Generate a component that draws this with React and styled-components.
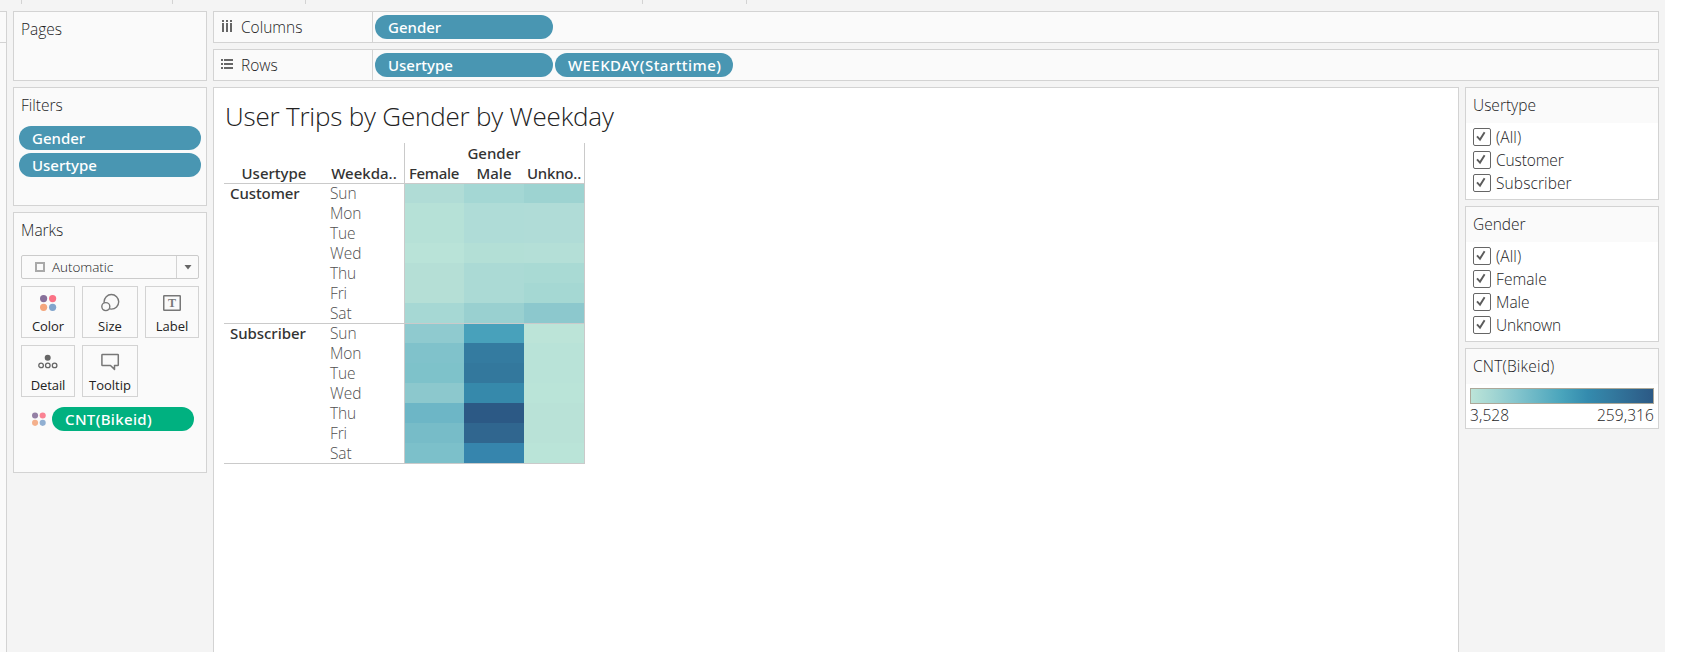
import React from 'react';
import styled, { createGlobalStyle } from 'styled-components';

const line = '#d3d3d3';
const panelBg = '#fafafa';
const ink = '#1c1c1e';

const GlobalStyle = createGlobalStyle`
  *, *::before, *::after { box-sizing: border-box; }
  body {
    margin: 0;
    background: #fff;
    color: ${ink};
    font: 300 15.5px/20px 'Open Sans', 'Noto Sans', sans-serif;
    overflow: hidden;
  }
  svg { display: block; flex: none; }
`;

const Workbook = styled.div`
  display: flex;
  flex-direction: column;
  width: 1665px;
  height: 652px;
  background: #f4f4f4;
`;

const ToolbarEdge = styled.div`
  display: flex;
  height: 11px;
  flex: none;
`;

const Separator = styled.div`
  width: 1px;
  height: 4px;
  margin-left: ${p => p.$gap}px;
  background: ${line};
`;

const Workspace = styled.div`
  display: flex;
  flex: 1;
  min-height: 0;
`;

const DataPane = styled.div`
  width: 7px;
  border: solid ${line};
  border-width: 1px 1px 0 0;
  background: ${panelBg};
`;

const DataPaneHeader = styled.div`
  height: 31px;
  border-bottom: 1px solid ${line};
`;

const CardColumn = styled.div`
  display: flex;
  flex-direction: column;
  gap: 6px;
  width: 194px;
  margin: 0 6px;
`;

const Card = styled.section`
  height: ${p => p.$height}px;
  border: 1px solid ${line};
  background: ${panelBg};
`;

const CardTitle = styled.h2`
  margin: 0 0 0 7px;
  padding-top: 6px;
  height: 29px;
  font: inherit;
  line-height: 22px;
  letter-spacing: ${p => p.$track || 0}px;
`;

const PillStack = styled.div`
  display: flex;
  flex-direction: column;
  gap: 3px;
  padding: 9px 5px 0;
`;

const Pill = styled.div`
  width: ${p => p.$width}px;
  height: 24px;
  padding-left: 13px;
  border-radius: 12px;
  background: ${p => (p.$measure ? '#00b180' : '#4996b2')};
  color: #fff;
  font: 500 15px/24px 'Noto Sans', sans-serif;
  letter-spacing: ${p => p.$track || 0}px;
  white-space: nowrap;
`;

const MarkBody = styled.div`
  padding: 13px 7px 0;
`;

const MarkType = styled.div`
  display: flex;
  align-items: center;
  height: 24px;
  border: 1px solid #cbcbcb;
  border-radius: 2px;
  font-size: 13.5px;
  letter-spacing: -0.05px;
`;

const MarkSquare = styled.span`
  width: 10px;
  height: 10px;
  margin: 0 7px 0 13px;
  border: 1.5px solid #a9a9a9;
  border-width: 2px;
`;

const DropButton = styled.span`
  display: flex;
  align-items: center;
  justify-content: center;
  width: 22px;
  height: 22px;
  margin-left: auto;
  border-left: 1px solid ${line};
`;

const MarkGrid = styled.div`
  display: grid;
  grid-template-columns: 54px 56px 54px;
  gap: 7px;
  margin-top: 7px;
`;

const MarkButton = styled.div`
  display: flex;
  flex-direction: column;
  align-items: center;
  height: 52px;
  padding-top: 6px;
  border: 1px solid ${line};
  color: #222;
  font-size: 13px;
  font-weight: 400;
  line-height: 18px;
`;

const MarkLabel = styled.span`
  margin-top: 4px;
  letter-spacing: ${p => p.$track || 0}px;
`;

const EncodedField = styled.div`
  display: flex;
  align-items: center;
  gap: 6px;
  margin: 10px 0 0 11px;
`;

const Main = styled.main`
  display: flex;
  flex-direction: column;
  gap: 6px;
  width: 1446px;
`;

const Shelf = styled.div`
  display: flex;
  flex: none;
  height: 32px;
  border: 1px solid ${line};
  background: ${panelBg};
`;

const ShelfLabel = styled.div`
  display: flex;
  align-items: center;
  gap: ${p => p.$gap}px;
  width: 159px;
  padding: 0 0 0 7px;
  border-right: 1px solid ${line};
  letter-spacing: ${p => p.$track || 0}px;

  svg { margin-bottom: 2px; }
`;

const ShelfPills = styled.div`
  display: flex;
  gap: 2px;
  padding: 3px 2px;
`;

const ViewRow = styled.div`
  display: flex;
  flex: 1;
  gap: 6px;
  min-height: 0;
`;

const Sheet = styled.section`
  width: 1246px;
  padding: 12px 10px 0;
  border: solid ${line};
  border-width: 1px 1px 0;
  background: #fff;
`;

const SheetTitle = styled.h1`
  margin: 0 0 0 1px;
  height: 43px;
  color: #222;
  font: 300 26px/32px 'Open Sans', sans-serif;
  letter-spacing: -0.2px;
`;

const CrossTab = styled.div`
  width: 361px;
  border-bottom: 1px solid #cacaca;
`;

const HeaderGrid = styled.div`
  display: grid;
  grid-template-columns: 100px 80px 181px;
  align-items: end;
  height: 40px;
`;

const HeaderText = styled.div`
  color: #333;
  font: 500 15px/20px 'Noto Sans', sans-serif;
  letter-spacing: ${p => p.$track || 0}px;
  text-align: center;
  white-space: nowrap;
`;

const ColumnHeaders = styled.div`
  display: grid;
  grid-template-columns: repeat(3, 60px);
  grid-template-rows: 20px 20px;
  width: 181px;
  margin-left: -0.5px;
  border: solid #cacaca;
  border-width: 0 1px;

  > :first-child { grid-column: 1 / -1; }
  > * { margin-left: -1px; }
`;

const GroupRow = styled.div`
  display: grid;
  grid-template-columns: 100px 80px 181px;
  height: 140px;
  border-top: 1px solid #cacaca;
`;

const GroupName = styled.div`
  margin-top: -1px;
  padding-left: 6px;
  color: #333;
  font: 500 15px/20px 'Noto Sans', sans-serif;
  letter-spacing: ${p => p.$track}px;
`;

const Days = styled.div`
  margin-top: -1px;
  padding-left: 6px;
  color: #505050;
  letter-spacing: -0.1px;
`;

const Heat = styled.div`
  display: grid;
  grid-template-columns: 59px 60px 60px;
  grid-template-rows: 19px repeat(6, 20px);
  border: solid #cacaca;
  border-width: 0 1px;
`;

const Cell = styled.div`
  background: ${p => p.$color};
`;

const Legends = styled.aside`
  display: flex;
  flex-direction: column;
  gap: 6px;
  width: 194px;
`;

const LegendCard = styled.section`
  height: ${p => p.$height}px;
  border: 1px solid ${line};
  background: #fff;
`;

const LegendTitle = styled.h2`
  margin: 0;
  height: 35px;
  padding: 6px 0 0 7px;
  background: ${panelBg};
  font: inherit;
  line-height: 22px;
  letter-spacing: ${p => p.$track || 0}px;
`;

const CheckList = styled.div`
  display: flex;
  flex-direction: column;
  gap: 5px;
  padding: 5px 7px;
`;

const CheckRow = styled.div`
  display: flex;
  align-items: center;
  gap: 5px;
  height: 18px;
  letter-spacing: ${p => p.$track || 0}px;
`;

const CheckBox = styled.span`
  width: 18px;
  height: 18px;
  border: 1px solid #666;
  border-radius: 2px;
`;

const Ramp = styled.div`
  height: 16px;
  margin: 4px 4px 0;
  border: 1px solid #aca899;
  background: linear-gradient(90deg, #bce4d8, #a3d6d3 12%, #84c5cd 25%, #49a4bc 50%, #348bae 64%, #337ba0 76%, #2c5985);
`;

const RampEnds = styled.div`
  display: flex;
  justify-content: space-between;
  padding: 1px 4px 0 4px;
  letter-spacing: 0.1px;
`;

const ColorDots = ({ size = 20, soft }) => (
  <svg width={size} height={size} viewBox={soft ? '2 1.5 16.5 16.5' : '0 0 20 20'} opacity={soft ? 0.88 : 1}>
    <circle cx="5.6" cy="5.6" r="3.6" fill="#87709a" />
    <circle cx="14.6" cy="5.6" r="3.6" fill="#fa7285" />
    <circle cx="5.6" cy="14.3" r="3.6" fill="#f4a67d" />
    <circle cx="14.6" cy="14.3" r="3.6" fill="#82a5cd" />
  </svg>
);

const SizeIcon = () => (
  <svg width="20" height="20" fill={panelBg} stroke="#777" strokeWidth="1.4">
    <circle cx="11.4" cy="8.8" r="7.3" />
    <circle cx="5.8" cy="13.6" r="4" />
  </svg>
);

const LabelIcon = () => (
  <svg width="20" height="20">
    <rect x="1.75" y="2.75" width="16.5" height="14.5" rx="0.5" fill="none" stroke="#777" strokeWidth="1.5" />
    <text x="10" y="14" textAnchor="middle" fontFamily="Liberation Serif, serif" fontWeight="700" fontSize="12" fill="#777">T</text>
  </svg>
);

const DetailIcon = () => (
  <svg width="20" height="20" fill="none" stroke="#666" strokeWidth="1.3">
    <circle cx="9.7" cy="5.8" r="3" fill="#666" stroke="none" />
    <circle cx="3.1" cy="13.4" r="2.3" />
    <circle cx="9.8" cy="13.4" r="2.3" />
    <circle cx="16.6" cy="13.4" r="2.3" />
  </svg>
);

const TooltipIcon = () => (
  <svg width="20" height="20" fill="none" stroke="#777" strokeWidth="1.5" strokeLinejoin="round">
    <path d="M2.5 2.5h15.2q.6 0 .6.6v9.8q0 .6-.6.6h-3.2v3.9l-4-3.9h-8q-.6 0-.6-.6V3.1q0-.6.6-.6z" />
  </svg>
);

const ColumnsIcon = () => (
  <svg width="12" height="12" fill="#666">
    {[1, 5, 9].map(x => (
      <g key={x}>
        <rect x={x} y="0" width="2" height="2" />
        <rect x={x} y="3" width="2" height="9" />
      </g>
    ))}
  </svg>
);

const RowsIcon = () => (
  <svg width="12" height="10" fill="#666">
    {[0, 4, 8].map(y => (
      <g key={y}>
        <rect x="0" y={y} width="2" height="2" />
        <rect x="3" y={y} width="9" height="2" />
      </g>
    ))}
  </svg>
);

const Tick = () => (
  <svg width="16" height="16" fill="none" stroke="#5c5c5c" strokeWidth="1.9">
    <path d="M3 7.4l3 3.2 4.6-7.4" />
  </svg>
);

const markButtons = [
  ['Color', ColorDots, -0.1],
  ['Size', SizeIcon, 0],
  ['Label', LabelIcon, 0],
  ['Detail', DetailIcon, -0.1],
  ['Tooltip', TooltipIcon, 0],
];

const days = ['Sun', 'Mon', 'Tue', 'Wed', 'Thu', 'Fri', 'Sat'];

const groups = [
  {
    name: 'Customer',
    track: -0.1,
    cells: [
      ['#b0dcd6', '#a4d7d4', '#9dd3d1'],
      ['#b6e1d7', '#afdcd7', '#b0dcd7'],
      ['#b6e1d7', '#afdcd7', '#b0dcd7'],
      ['#b9e3d8', '#b3dfd6', '#b4dfd7'],
      ['#b5dfd6', '#abdad5', '#a9dad4'],
      ['#b5dfd6', '#abdad5', '#a5d8d3'],
      ['#a6d8d4', '#99d0d0', '#8cc8cd'],
    ],
  },
  {
    name: 'Subscriber',
    track: -0.05,
    cells: [
      ['#8fcacf', '#48a1bb', '#bce4d8'],
      ['#80c2cb', '#347ba0', '#b9e3d8'],
      ['#7ec2ca', '#33789d', '#b9e3d8'],
      ['#8cc8cd', '#3689ab', '#bae4d8'],
      ['#6db6c6', '#2c5985', '#b9e2d7'],
      ['#77bcc8', '#30668f', '#b9e2d7'],
      ['#7cc0ca', '#3685ad', '#bae4d8'],
    ],
  },
];

const filters = [
  { title: 'Usertype', height: 113, track: 0, items: [['(All)', 0.1], ['Customer', -0.1], ['Subscriber', 0.1]] },
  { title: 'Gender', height: 136, track: 0, items: [['(All)', 0.1], ['Female', 0.1], ['Male', 0], ['Unknown', -0.2]] },
];

export default function App() {
  return (
    <Workbook>
      <GlobalStyle />
      <ToolbarEdge>
        {[21, 150, 132, 336, 103].map(gap => <Separator key={gap} $gap={gap} />)}
      </ToolbarEdge>
      <Workspace>
        <DataPane><DataPaneHeader /></DataPane>
        <CardColumn>
          <Card $height={70}><CardTitle>Pages</CardTitle></Card>
          <Card $height={119}>
            <CardTitle>Filters</CardTitle>
            <PillStack>
              <Pill $width={182}>Gender</Pill>
              <Pill $width={182}>Usertype</Pill>
            </PillStack>
          </Card>
          <Card $height={261}>
            <CardTitle>Marks</CardTitle>
            <MarkBody>
              <MarkType>
                <MarkSquare />
                Automatic
                <DropButton>
                  <svg width="8" height="5" fill="#666"><path d="M0.5 0h7L4 4.6z" /></svg>
                </DropButton>
              </MarkType>
              <MarkGrid>
                {markButtons.map(([label, Icon, track]) => (
                  <MarkButton key={label}>
                    <Icon />
                    <MarkLabel $track={track}>{label}</MarkLabel>
                  </MarkButton>
                ))}
              </MarkGrid>
              <EncodedField>
                <ColorDots size={14} soft />
                <Pill $width={142} $measure $track={0.35}>CNT(Bikeid)</Pill>
              </EncodedField>
            </MarkBody>
          </Card>
        </CardColumn>
        <Main>
          <Shelf>
            <ShelfLabel $gap={8}><ColumnsIcon />Columns</ShelfLabel>
            <ShelfPills><Pill $width={178}>Gender</Pill></ShelfPills>
          </Shelf>
          <Shelf>
            <ShelfLabel $gap={8}><RowsIcon />Rows</ShelfLabel>
            <ShelfPills>
              <Pill $width={178}>Usertype</Pill>
              <Pill $width={178} $track={0.45}>WEEKDAY(Starttime)</Pill>
            </ShelfPills>
          </Shelf>
          <ViewRow>
            <Sheet>
              <SheetTitle>User Trips by Gender by Weekday</SheetTitle>
              <CrossTab>
                <HeaderGrid>
                  <HeaderText>Usertype</HeaderText>
                  <HeaderText>Weekda..</HeaderText>
                  <ColumnHeaders>
                    <HeaderText>Gender</HeaderText>
                    <HeaderText $track={-0.3}>Female</HeaderText>
                    <HeaderText>Male</HeaderText>
                    <HeaderText $track={-0.2}>Unkno..</HeaderText>
                  </ColumnHeaders>
                </HeaderGrid>
                {groups.map(g => (
                  <GroupRow key={g.name}>
                    <GroupName $track={g.track}>{g.name}</GroupName>
                    <Days>{days.map(d => <div key={d}>{d}</div>)}</Days>
                    <Heat>
                      {g.cells.flatMap((row, r) => row.map((c, i) => <Cell key={`${r}-${i}`} $color={c} />))}
                    </Heat>
                  </GroupRow>
                ))}
              </CrossTab>
            </Sheet>
            <Legends>
              {filters.map(f => (
                <LegendCard key={f.title} $height={f.height}>
                  <LegendTitle $track={f.track}>{f.title}</LegendTitle>
                  <CheckList>
                    {f.items.map(([label, track]) => (
                      <CheckRow key={label} $track={track}>
                        <CheckBox><Tick /></CheckBox>
                        {label}
                      </CheckRow>
                    ))}
                  </CheckList>
                </LegendCard>
              ))}
              <LegendCard $height={81}>
                <LegendTitle $track={0.2}>CNT(Bikeid)</LegendTitle>
                <Ramp />
                <RampEnds><span>3,528</span><span>259,316</span></RampEnds>
              </LegendCard>
            </Legends>
          </ViewRow>
        </Main>
      </Workspace>
    </Workbook>
  );
}
